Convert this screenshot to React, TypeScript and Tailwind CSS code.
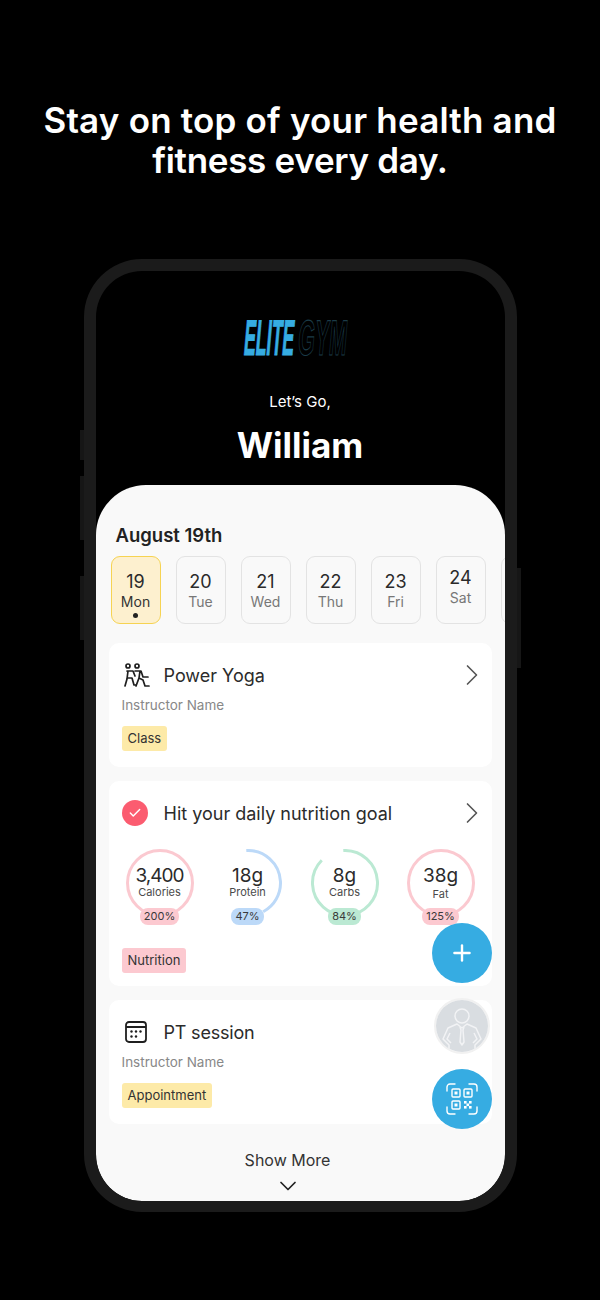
import React from "react";
import { ChevronRight, ChevronDown, Plus, Check } from "lucide-react";

const days = [
  { num: "19", name: "Mon", active: true },
  { num: "20", name: "Tue" },
  { num: "21", name: "Wed" },
  { num: "22", name: "Thu" },
  { num: "23", name: "Fri" },
  { num: "24", name: "Sat", raised: true },
  { num: "", name: "" },
];

const rings = [
  { value: "3,400", label: "Calories", pct: "200%", stroke: "#fbc9d0", pill: "bg-[#fcc9d0]", start: 0, part: 1, box: "", valueCls: "tracking-[-1px]", labelCls: "" },
  { value: "18g", label: "Protein", pct: "47%", stroke: "#bcd9f8", pill: "bg-[#bcd9f8]", start: -3, part: 0.43, box: "ml-[20px]", valueCls: "", labelCls: "" },
  { value: "8g", label: "Carbs", pct: "84%", stroke: "#bbe9d3", pill: "bg-[#bbe9d3]", start: -3, part: 0.88, box: "ml-[29px]", valueCls: "", labelCls: "" },
  { value: "38g", label: "Fat", pct: "125%", stroke: "#fbc9d0", pill: "bg-[#fcc9d0]", start: 0, part: 1, box: "ml-[28px]", valueCls: "", labelCls: "mt-[2px]" },
];

const Ring = ({ value, label, pct, stroke, pill, start, part, box, valueCls, labelCls }: (typeof rings)[number]) => {
  const len = 2 * Math.PI * 32.5;
  return (
    <div className={`relative w-[68px] h-[84px] flex flex-col items-center ${box}`}>
      <svg width="68" height="68" viewBox="0 0 68 68" className="absolute top-0 left-0">
        <circle
          cx="34"
          cy="34"
          r="32.5"
          fill="none"
          stroke={stroke}
          strokeWidth="3"
          strokeDasharray={`${len * part} ${len}`}
          transform={`rotate(${start - 90} 34 34)`}
        />
      </svg>
      <div className={`relative mt-[16px] text-[19px] leading-[21px] text-[#2b2b2b] ${valueCls}`}>{value}</div>
      <div className={`relative text-[11px] leading-[13px] text-[#4a4a4a] ${labelCls}`}>{label}</div>
      <div className={`absolute top-[59px] h-[17px] px-[4px] rounded-[8px] text-[11px] leading-[17px] text-[#3a3a3a] ${pill}`}>
        {pct}
      </div>
    </div>
  );
};

const YogaIcon = () => (
  <svg width="26" height="24" viewBox="0 0 26 24" fill="none" stroke="#1f1f1f" strokeWidth="1.7" strokeLinecap="round" strokeLinejoin="round">
    <circle cx="4" cy="3" r="2" />
    <circle cx="13" cy="3" r="2" />
    <path d="M3 8h6l2 5M4 8l-1 8-2 7M4 15h4l2 7h2" />
    <path d="M11 8h6l2 6h5M16 8l-1 7-3 8M15 15l4 2 2 6h4" />
  </svg>
);

const CalendarIcon = () => (
  <svg width="22" height="22" viewBox="0 0 22 22" fill="none" stroke="#1f1f1f" strokeWidth="1.8">
    <rect x="1" y="1" width="20" height="20" rx="3" />
    <path d="M1 6h20" />
    <g fill="#1f1f1f" stroke="none">
      <circle cx="6.5" cy="10.5" r="1.2" />
      <circle cx="11" cy="10.5" r="1.2" />
      <circle cx="15.5" cy="10.5" r="1.2" />
      <circle cx="6.5" cy="15.5" r="1.2" />
      <circle cx="11" cy="15.5" r="1.2" />
    </g>
  </svg>
);

const QrIcon = () => (
  <svg width="32" height="32" viewBox="0 0 32 32" fill="none" stroke="#fff" strokeWidth="1.4" strokeLinecap="round">
    <path d="M1 8V4a3 3 0 0 1 3-3h5M23 1h5a3 3 0 0 1 3 3v4M1 24v4a3 3 0 0 0 3 3h5M31 24v4a3 3 0 0 1-3 3h-5" />
    <rect x="6" y="6" width="8" height="8" rx="1" />
    <rect x="18" y="6" width="8" height="8" rx="1" />
    <rect x="6" y="18" width="8" height="8" rx="1" />
    <g fill="#fff" stroke="none">
      <rect x="8.5" y="8.5" width="3" height="3" />
      <rect x="20.5" y="8.5" width="3" height="3" />
      <rect x="8.5" y="20.5" width="3" height="3" />
      <rect x="18" y="18" width="2.6" height="2.6" />
      <rect x="23" y="18" width="2.6" height="2.6" />
      <rect x="20.5" y="20.5" width="2.6" height="2.6" />
      <rect x="18" y="23" width="2.6" height="2.6" />
      <rect x="23" y="23" width="2.6" height="2.6" />
    </g>
  </svg>
);

const PersonIcon = () => (
  <svg width="52" height="52" viewBox="0 0 52 52" fill="none" className="block">
    <clipPath id="avatar-clip">
      <circle cx="26" cy="26" r="26" />
    </clipPath>
    <circle cx="26" cy="26" r="26" fill="#d9dde1" />
    <g clipPath="url(#avatar-clip)" stroke="#f2f3f5" strokeWidth="1.5" strokeLinejoin="round">
      <circle cx="26" cy="16" r="7" />
      <path d="M21 24l-9 4-5 11 6 6v8h26v-8l6-6-5-11-9-4-5 4z" />
      <path d="M24 27l1 3-1 12 2 3 2-3-1-12 1-3M14 33l-3 6 4 4M38 33l3 6-4 4" />
    </g>
  </svg>
);

const Tag = ({ className, children }: { className: string; children: React.ReactNode }) => (
  <div className={`inline-block h-[25px] px-[6px] rounded-[3px] text-[13px] leading-[25px] text-[#333] ${className}`}>{children}</div>
);

const Arrow = () => <ChevronRight size={36} strokeWidth={1.1} className="shrink-0 text-[#555] mr-[-11px]" />;

const App = () => {
  return (
    <div className="w-[600px] h-[1300px] bg-black overflow-hidden font-['Inter','Liberation_Sans',sans-serif]">
      <h1 className="pt-[100px] text-center text-white text-[35px] leading-[40px] font-semibold tracking-[0.2px]">
        Stay on top of your health and
        <br />
        <span className="tracking-[-0.3px]">fitness every day.</span>
      </h1>

      <div className="relative mt-[79px] mx-auto w-[433px] h-[953px]">
        {/* side buttons */}
        <div className="absolute left-[-4px] top-[171px] w-[4px] h-[30px] bg-[#161616]" />
        <div className="absolute left-[-4px] top-[217px] w-[4px] h-[64px] bg-[#161616]" />
        <div className="absolute left-[-4px] top-[317px] w-[4px] h-[64px] bg-[#161616]" />
        <div className="absolute right-[-4px] top-[309px] w-[4px] h-[100px] bg-[#161616]" />

        <div className="h-full border-[12px] border-b-[11px] border-[#1b1b1b] rounded-[58px] bg-black overflow-hidden flex flex-col">
          <div className="flex flex-col items-center h-[214px]">
            <svg width="120" height="40" viewBox="0 0 120 40" className="mt-[47px] shrink-0">
              <text transform="translate(3 37) skewX(-5) scale(0.353 1)" fontFamily="Liberation Sans" fontWeight="700" fontSize="50" fill="#36ace2" stroke="#36ace2" strokeWidth="1.2">
                ELITE
              </text>
              <text transform="translate(57 37) skewX(-5) scale(0.43 1)" fontFamily="Liberation Sans" fontWeight="700" fontSize="50" fill="none" stroke="#1b3b48" strokeWidth="0.8" vectorEffect="non-scaling-stroke">
                GYM
              </text>
            </svg>
            <div className="mt-[34px] text-white text-[15px] leading-[20px]">Let’s Go,</div>
            <div className="mt-[13px] text-white text-[35px] leading-[40px] font-bold">William</div>
          </div>

          <div className="relative flex-1 bg-[#f9f9f9] rounded-t-[50px] rounded-b-[46px] overflow-hidden">
            <div className="pl-[20px] pt-[38px] text-[18.5px] leading-[24px] font-semibold text-[#222]">August 19th</div>

            <div className="mt-[9px] pl-[15px] flex gap-[15px]">
              {days.map((d) => (
                <div
                  key={d.num || "next"}
                  className={`shrink-0 w-[50px] h-[68px] rounded-[9px] border flex flex-col items-center ${
                    d.active ? "bg-[#fdf0cf] border-[#f6d352]" : "border-[#e3e3e3]"
                  } ${d.raised ? "pt-[9px]" : "pt-[13px]"}`}
                >
                  <div className="text-[18px] leading-[24px] text-[#2b2b2b]">{d.num}</div>
                  <div className={`mt-[-1px] text-[14px] leading-[18px] ${d.active ? "text-[#333]" : "text-[#777]"}`}>{d.name}</div>
                  {d.active && <div className="mt-[2px] w-[5px] h-[5px] rounded-full bg-[#222]" />}
                </div>
              ))}
            </div>

            <div className="mt-[19px] mx-[13px] flex flex-col gap-[14px]">
              <div className="h-[124px] bg-white rounded-[10px] px-[13px] pt-[19px]">
                <div className="flex items-center h-[26px]">
                  <div className="w-[42px] pl-[2px]"><YogaIcon /></div>
                  <div className="flex-1 text-[18px] text-[#2b2b2b]">Power Yoga</div>
                  <Arrow />
                </div>
                <div className="mt-[7px] text-[13.5px] leading-[20px] text-[#888]">Instructor Name</div>
                <Tag className="mt-[11px] bg-[#fdeaa8]">Class</Tag>
              </div>

              <div className="h-[205px] bg-white rounded-[10px] px-[13px] pt-[19px]">
                <div className="flex items-center h-[26px]">
                  <div className="w-[42px]">
                    <div className="w-[26px] h-[26px] rounded-full bg-[#fb5c70] flex items-center justify-center">
                      <Check size={14} strokeWidth={2.5} className="text-white" />
                    </div>
                  </div>
                  <div className="flex-1 text-[18px] text-[#2b2b2b]">Hit your daily nutrition goal</div>
                  <Arrow />
                </div>
                <div className="mt-[23px] ml-[4px] flex">
                  {rings.map((r) => (
                    <Ring key={r.label} {...r} />
                  ))}
                </div>
                <Tag className="mt-[15px] bg-[#fcc9d0]">Nutrition</Tag>
              </div>

              <div className="h-[124px] bg-white rounded-[10px] px-[13px] pt-[19px]">
                <div className="flex items-center h-[26px]">
                  <div className="w-[42px] pl-[3px]"><CalendarIcon /></div>
                  <div className="flex-1 text-[18px] tracking-[-0.2px] text-[#2b2b2b]">PT session</div>
                </div>
                <div className="mt-[7px] text-[13.5px] leading-[20px] text-[#888]">Instructor Name</div>
                <Tag className="mt-[11px] bg-[#fdeaa8]">Appointment</Tag>
              </div>
            </div>

            <div className="mt-[24px] flex flex-col items-center pr-[25px]">
              <div className="text-[16px] leading-[24px] text-[#333]">Show More</div>
              <ChevronDown size={28} strokeWidth={1.5} className="text-[#222]" />
            </div>

            <div className="absolute right-[13px] top-[438px] flex flex-col items-center gap-[15px]">
              <div className="w-[60px] h-[60px] rounded-full bg-[#36ace2] flex items-center justify-center">
                <Plus size={26} strokeWidth={2.2} className="text-white" />
              </div>
              <div className="rounded-full border-2 border-[#f1f1f1]">
                <PersonIcon />
              </div>
              <div className="w-[60px] h-[60px] rounded-full bg-[#36ace2] flex items-center justify-center">
                <QrIcon />
              </div>
            </div>
          </div>
        </div>
      </div>
    </div>
  );
};

export default App;
